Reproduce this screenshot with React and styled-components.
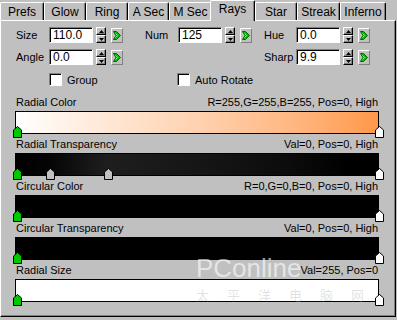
import React from 'react'
import styled, { createGlobalStyle } from 'styled-components'

const GlobalStyle = createGlobalStyle`
  html, body {
    margin: 0;
    padding: 0;
    background: #c0c0c0;
  }
  body {
    font-family: "Liberation Sans", Arial, sans-serif;
    font-size: 11px;
    color: #000;
  }
`

const Window = styled.div`
  position: relative;
  width: 397px;
  height: 320px;
  overflow: hidden;
  background: #c0c0c0;
`

const TabRow = styled.div`
  position: relative;
  z-index: 2;
  display: flex;
  align-items: flex-start;
  height: 20px;
`

const Tab = styled.div`
  box-sizing: border-box;
  flex: none;
  width: ${p => p.$w}px;
  height: ${p => (p.$active ? 21 : 18)}px;
  margin: ${p => (p.$active ? '0 0 0 -2px' : '2px 0 0 0')};
  padding-top: ${p => (p.$active ? 1 : 2)}px;
  background: #c0c0c0;
  border-top: 1px solid #fff;
  border-left: 1px solid #fff;
  border-right: 1px solid #000;
  box-shadow: inset -1px 0 #808080;
  border-radius: 2px 2px 0 0;
  text-align: center;
  font-size: 12px;
  line-height: 14px;
`

const Panel = styled.div`
  box-sizing: border-box;
  width: 396px;
  height: 297px;
  padding: 6px 16px 0 14px;
  border-top: 1px solid #fff;
  border-left: 1px solid #fff;
  border-right: 1px solid #000;
  border-bottom: 1px solid #000;
  box-shadow: inset -1px -1px #808080;
`

const Row = styled.div`
  display: flex;
  align-items: center;
  height: ${p => p.$h || 16}px;
  margin-top: ${p => p.$mt || 0}px;
`

const Group = styled.div`
  display: flex;
  align-items: center;
  flex: none;
  width: ${p => p.$w}px;
`

const Label = styled.span`
  box-sizing: border-box;
  flex: none;
  width: ${p => p.$w}px;
  padding-left: 1px;
  white-space: nowrap;
`

const Field = styled.div`
  box-sizing: border-box;
  width: 44px;
  height: 16px;
  padding: 1px 0 0 3px;
  background: #fff;
  border: 1px solid;
  border-color: #808080 #fff #fff #808080;
  box-shadow: inset 1px 1px #000;
  font-size: 12px;
  line-height: 13px;
`

const Spin = styled.div`
  display: flex;
  flex-direction: column;
  margin-left: 3px;
  width: 10px;
  height: 16px;
`

const SpinButton = styled.div`
  box-sizing: border-box;
  flex: 1;
  display: flex;
  align-items: center;
  justify-content: center;
  background: #c0c0c0;
  border-top: 1px solid #fff;
  border-left: 1px solid #fff;
  border-right: 1px solid #000;
  border-bottom: 1px solid #000;
  box-shadow: inset -1px -1px #808080;
`

const GoButton = styled.div`
  box-sizing: border-box;
  display: flex;
  align-items: center;
  justify-content: center;
  margin-left: 5px;
  width: 12px;
  height: 15px;
  background: #c0c0c0;
  border-top: 1px solid #fff;
  border-left: 1px solid #fff;
  border-right: 1px solid #808080;
  border-bottom: 1px solid #808080;
`

const CheckBox = styled.div`
  box-sizing: border-box;
  width: 13px;
  height: 13px;
  background: #fff;
  border: 1px solid;
  border-color: #808080 #fff #fff #808080;
  box-shadow: inset 1px 1px #000;
`

const CheckText = styled.span`
  margin-left: 5px;
`

const Sections = styled.div`
  margin-top: 10px;
`

const Section = styled.div`
  margin-bottom: 4px;
`

const Header = styled.div`
  display: flex;
  justify-content: space-between;
  height: 13px;
  line-height: 13px;
  padding: 0 1px;
  white-space: nowrap;
`

const Bar = styled.div`
  position: relative;
  box-sizing: border-box;
  height: 23px;
  margin-top: 2px;
  border: 1px solid #000;
  background: ${p => p.$fill};
`

const MarkerWrap = styled.div`
  position: absolute;
  bottom: -5px;
  width: 9px;
  height: 12px;
  margin-left: -3px;
  line-height: 0;
`

const Watermark = styled.div`
  position: absolute;
  left: 196px;
  top: 254px;
  pointer-events: none;
  display: flex;
  flex-direction: column;
`

const WaterBrand = styled.span`
  font-family: "Liberation Sans", Arial, sans-serif;
  font-size: 26px;
  line-height: 28px;
  color: rgba(255, 255, 255, 0.6);
`

const WaterCn = styled.span`
  margin-top: 6px;
  font-family: "Noto Sans CJK SC", sans-serif;
  font-size: 13px;
  line-height: 14px;
  letter-spacing: 18px;
  color: rgba(150, 150, 150, 0.28);
`

const Triangle = ({ up }) => (
  <svg width="5" height="3" viewBox="0 0 5 3">
    <path d={up ? 'M2.5 0 L5 3 L0 3 Z' : 'M0 0 L5 0 L2.5 3 Z'} fill="#000" />
  </svg>
)

const Spinner = () => (
  <Spin>
    <SpinButton><Triangle up /></SpinButton>
    <SpinButton><Triangle /></SpinButton>
  </Spin>
)

const GoIcon = () => (
  <svg width="8" height="9" viewBox="0 0 8 9">
    <path d="M0.5 0.5 H3.5 L7.5 4.5 L3.5 8.5 H0.5 L3 4.5 Z" fill="#00c000" stroke="#006400" strokeWidth="1" />
    <path d="M2.5 2.5 L4.5 4.5 L2.5 6.5" fill="none" stroke="#80ff80" strokeWidth="1" />
  </svg>
)

const Param = ({ label, labelW, value }) => (
  <>
    <Label $w={labelW}>{label}</Label>
    <Field>{value}</Field>
    <Spinner />
    <GoButton><GoIcon /></GoButton>
  </>
)

const markerColors = { green: '#00c800', gray: '#c0c0c0', white: '#fff' }

const Marker = ({ pos, kind }) => (
  <MarkerWrap style={{ left: `${pos}%` }}>
    <svg width="9" height="12" viewBox="0 0 9 12">
      <path d="M0.5 11.5 V4 L4.5 0.5 L8.5 4 V11.5 Z" fill={markerColors[kind]} stroke="#000" strokeWidth="1" />
    </svg>
  </MarkerWrap>
)

const tabs = [
  ['Prefs', 44], ['Glow', 42], ['Ring', 42], ['A Sec', 41], ['M Sec', 43],
  ['Rays', 45], ['Star', 42], ['Streak', 43], ['Inferno', 46],
]

const sections = [
  {
    name: 'Radial Color',
    info: 'R=255,G=255,B=255, Pos=0, High',
    fill: 'linear-gradient(to right, #ffffff 0%, #ffeadb 22%, #ffd2b0 50%, #ffb57f 78%, #ff984a 100%)',
    markers: [[0, 'green'], [100, 'white']],
  },
  {
    name: 'Radial Transparency',
    info: 'Val=0, Pos=0, High',
    fill: 'linear-gradient(to right, #000 0%, #050505 9%, #1e1e1e 25%, #161616 50%, #0c0c0c 75%, #000 92%)',
    markers: [[0, 'green'], [9, 'gray'], [25, 'gray'], [100, 'white']],
  },
  {
    name: 'Circular Color',
    info: 'R=0,G=0,B=0, Pos=0, High',
    fill: '#000',
    markers: [[0, 'green'], [100, 'white']],
  },
  {
    name: 'Circular Transparency',
    info: 'Val=0, Pos=0, High',
    fill: '#000',
    markers: [[0, 'green'], [100, 'white']],
  },
  {
    name: 'Radial Size',
    info: 'Val=255, Pos=0',
    fill: '#fff',
    markers: [[0, 'green'], [100, 'white']],
  },
]

export default function App() {
  return (
    <Window>
      <GlobalStyle />
      <TabRow>
        {tabs.map(([name, w]) => (
          <Tab key={name} $w={w} $active={name === 'Rays'}>{name}</Tab>
        ))}
      </TabRow>
      <Panel>
        <Row>
          <Group $w={129}><Param label="Size" labelW={34} value="110.0" /></Group>
          <Group $w={119}><Param label="Num" labelW={34} value="125" /></Group>
          <Group><Param label="Hue" labelW={33} value="0.0" /></Group>
        </Row>
        <Row $mt={6}>
          <Group $w={129}><Param label="Angle" labelW={34} value="0.0" /></Group>
          <Group $w={119} />
          <Group><Param label="Sharp" labelW={33} value="9.9" /></Group>
        </Row>
        <Row $mt={8} $h={13}>
          <Group $w={129}>
            <Label $w={34} />
            <CheckBox />
            <CheckText>Group</CheckText>
          </Group>
          <Group $w={119}>
            <Label $w={33} />
            <CheckBox />
            <CheckText>Auto Rotate</CheckText>
          </Group>
        </Row>
        <Sections>
          {sections.map(s => (
            <Section key={s.name}>
              <Header>
                <span>{s.name}</span>
                <span>{s.info}</span>
              </Header>
              <Bar $fill={s.fill}>
                {s.markers.map(([pos, kind]) => (
                  <Marker key={pos} pos={pos} kind={kind} />
                ))}
              </Bar>
            </Section>
          ))}
        </Sections>
      </Panel>
      <Watermark>
        <WaterBrand>PConline</WaterBrand>
        <WaterCn>太平洋电脑网</WaterCn>
      </Watermark>
    </Window>
  )
}
